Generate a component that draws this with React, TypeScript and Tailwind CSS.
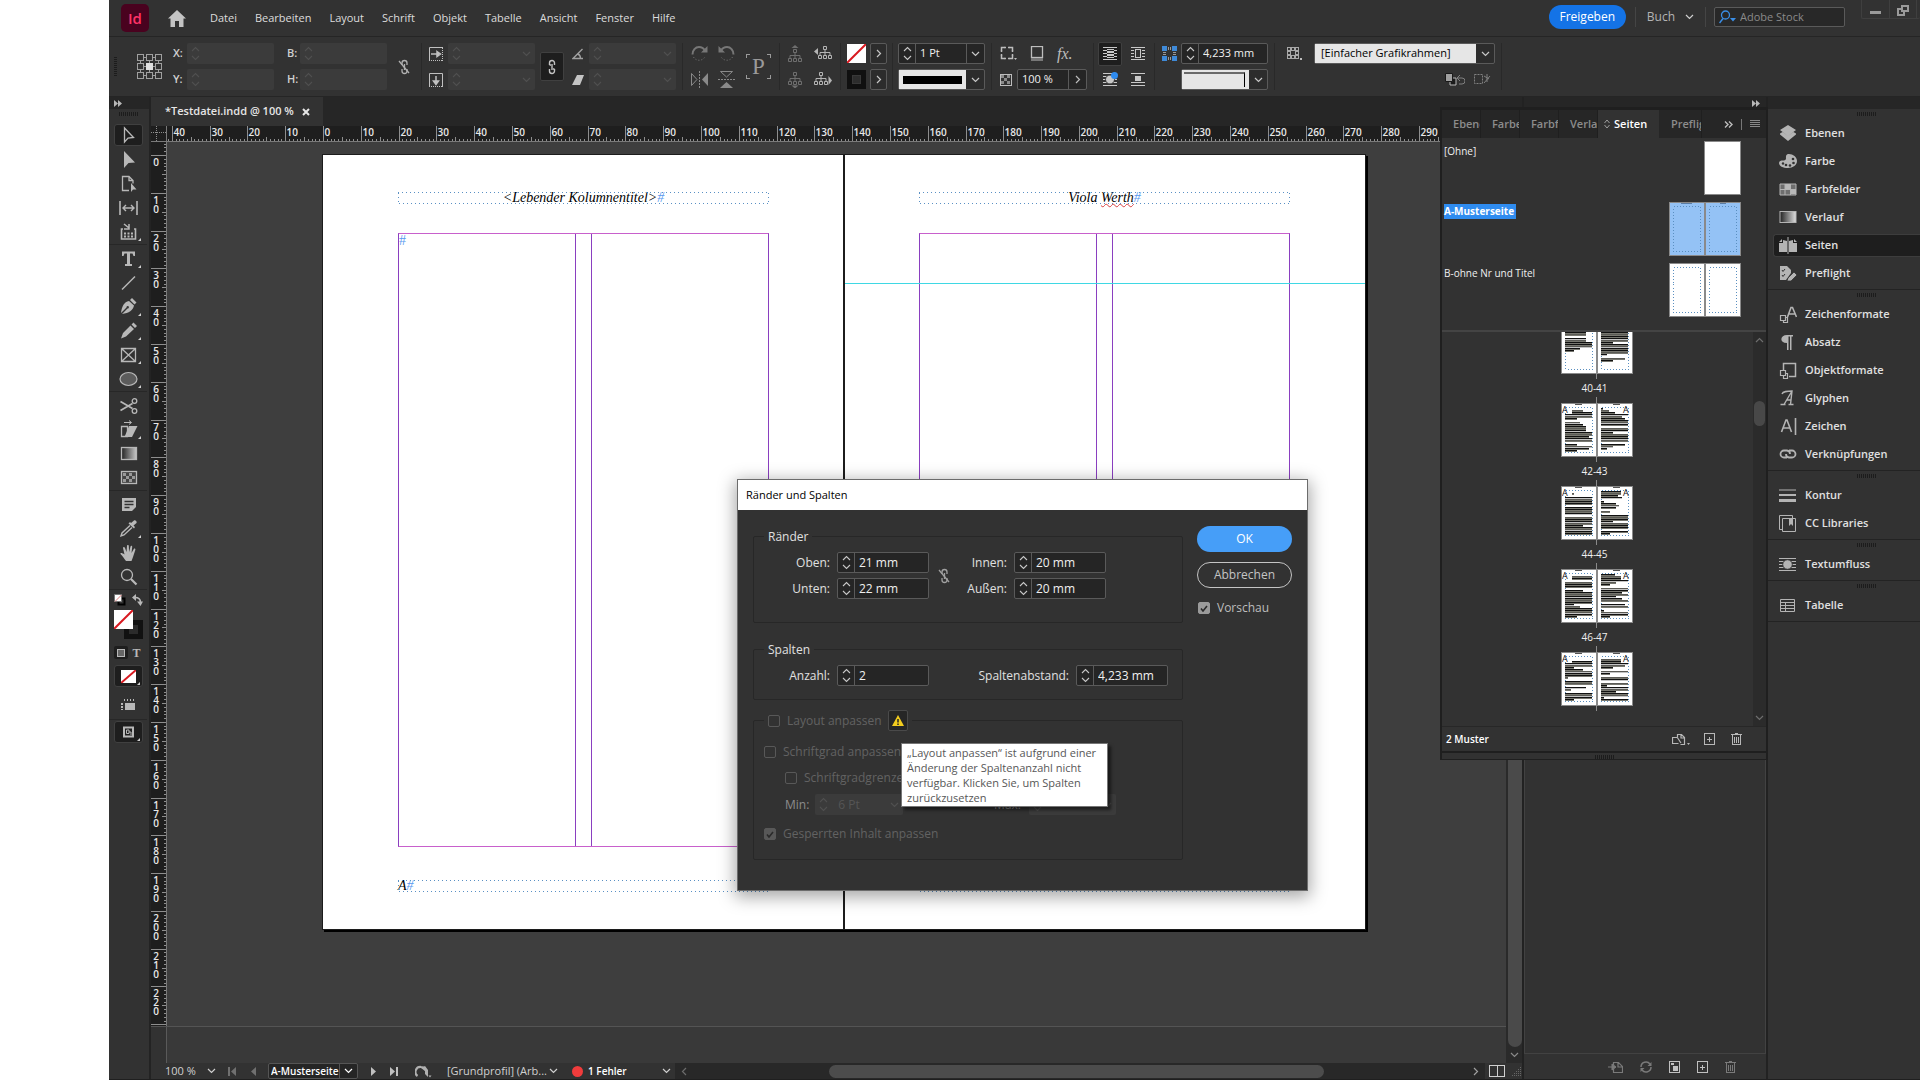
import type { ReactNode } from "react";
import { clsx } from "clsx";

const MM10 = 96 / 2.54;

/* ---------- shared bits ---------- */

function Svg({
  w,
  h,
  crisp,
  className,
  children
}: {
  w: number;
  h: number;
  crisp?: boolean;
  className?: string;
  children: ReactNode;
}) {
  return (
    <svg
      width={w}
      height={h}
      viewBox={`0 0 ${w} ${h}`}
      fill="none"
      stroke="currentColor"
      shapeRendering={crisp ? "crispEdges" : "auto"}
      className={clsx("shrink-0", className)}
      aria-hidden="true"
    >
      {children}
    </svg>
  );
}

function ChevronDown({ className }: { className?: string }) {
  return (
    <Svg w={9} h={6} className={className}>
      <path d="M1 1l3.5 3.5L8 1" strokeWidth="1.2" />
    </Svg>
  );
}

function ChevronRight({ className }: { className?: string }) {
  return (
    <Svg w={6} h={9} className={className}>
      <path d="M1 1l3.5 3.5L1 8" strokeWidth="1.2" />
    </Svg>
  );
}

function DoubleArrow({ className }: { className?: string }) {
  return (
    <Svg w={8} h={7} className={className}>
      <path d="M0 0l4 3.5L0 7zM4 0l4 3.5L4 7z" fill="currentColor" stroke="none" />
    </Svg>
  );
}

function Grip({ className }: { className?: string }) {
  return (
    <Svg w={19} h={4} crisp className={clsx("text-[#1c1c1c]", className)}>
      <path d="M0 2h19" strokeWidth="4" strokeDasharray="1 1" />
    </Svg>
  );
}

function BrokenLink({ className }: { className?: string }) {
  return (
    <Svg w={12} h={16} className={className}>
      <path d="M4 6V4a2.5 2.5 0 015 0v2M4 10v2a2.5 2.5 0 005 0v-2M6.5 5v6" strokeWidth="1.3" />
      <path d="M1 2l10 12" strokeWidth="1.3" />
    </Svg>
  );
}

function Spinner({ dim }: { dim?: boolean }) {
  return (
    <button
      type="button"
      tabIndex={-1}
      disabled={dim}
      aria-label="Wert ändern"
      className={clsx(
        "flex w-[17px] shrink-0 items-center justify-center",
        dim ? "text-[#505050]" : "border-r border-[#5a5a5a] text-[#c8c8c8]"
      )}
    >
      <Svg w={9} h={15}>
        <path d="M1 5l3.5-3.5L8 5M1 10l3.5 3.5L8 10" strokeWidth="1.1" />
      </Svg>
    </button>
  );
}

type FieldProps = {
  id: string;
  label?: string;
  value?: string;
  disabled?: boolean;
  drop?: boolean;
  className?: string;
  inputClassName?: string;
};

function Field({ id, label, value = "", disabled, drop, className, inputClassName }: FieldProps) {
  return (
    <div
      className={clsx(
        "flex h-[21px] shrink-0 rounded-xs",
        disabled ? "bg-[#3b3b3b]" : "border border-[#5a5a5a] bg-[#252525]",
        className
      )}
    >
      <Spinner dim={disabled} />
      <input
        id={id}
        aria-label={label}
        defaultValue={value}
        disabled={disabled}
        className={clsx(
          "w-0 min-w-0 flex-1 bg-transparent outline-none",
          disabled ? "text-[#555555]" : "text-[#f0f0f0]",
          inputClassName ?? "pl-1 text-[11px]"
        )}
      />
      {drop && (
        <span
          className={clsx(
            "flex w-[18px] items-center justify-center",
            disabled ? "text-[#505050]" : "border-l border-[#5a5a5a] text-[#c8c8c8]"
          )}
        >
          <ChevronDown />
        </span>
      )}
    </div>
  );
}

function Sep({ className }: { className?: string }) {
  return <div className={clsx("h-[47px] w-px shrink-0 bg-[#292929]", className)} />;
}

/* ---------- menu bar ---------- */

const menus = ["Datei", "Bearbeiten", "Layout", "Schrift", "Objekt", "Tabelle", "Ansicht", "Fenster", "Hilfe"];

function MenuBar() {
  return (
    <header className="flex h-[37px] shrink-0 items-center border-b border-[#252525] pl-3">
      <div className="flex size-7 items-center justify-center rounded-[5px] bg-[#49021f] text-[15px] font-semibold text-[#ff3366]">
        Id
      </div>
      <button type="button" aria-label="Startseite" className="ml-[19px] text-[#c4c4c4]">
        <Svg w={18} h={17}>
          <path d="M9 0l9 8.5h-2.500V17H11v-6H7v6H2.500V8.500H0z" fill="currentColor" stroke="none" />
        </Svg>
      </button>
      <nav className="ml-6 flex gap-[18px] text-[11px] text-[#dcdcdc]">
        {menus.map((m) => (
          <button key={m} type="button">
            {m}
          </button>
        ))}
      </nav>
      <div className="ml-auto flex h-full items-center">
        <button type="button" className="mb-0.5 h-6 w-[77px] rounded-full bg-[#1473e6] text-xs text-white">
          Freigeben
        </button>
        <div className="mb-0.5 ml-[9px] h-5 w-px bg-[#454545]" />
        <button type="button" className="mb-0.5 ml-[11px] flex items-center gap-[10px] text-xs text-[#b4b4b4]">
          Buch
          <ChevronDown className="text-[#d0d0d0]" />
        </button>
        <div className="mb-0.5 ml-[11px] h-5 w-px bg-[#454545]" />
        <label className="mb-0.5 ml-2 flex h-5 w-[131px] items-center rounded-xs border border-[#5a5a5a] bg-[#282828] pl-1">
          <Svg w={17} h={14} className="text-[#3a8ee6]">
            <circle cx="6.500" cy="5" r="4" strokeWidth="1.3" />
            <path d="M4 8.500L0.500 13" strokeWidth="1.5" />
            <path d="M11 8h6l-3 3.500z" fill="currentColor" stroke="none" />
          </Svg>
          <input
            type="search"
            aria-label="Adobe Stock durchsuchen"
            placeholder="Adobe Stock"
            className="ml-1 w-0 flex-1 bg-transparent text-[11px] outline-none placeholder:text-[#8a8a8a]"
          />
        </label>
        <div className="ml-4 flex h-[19px] self-start rounded-b-xs border border-t-0 border-r-0 border-[#3f3f3f] text-[#9a9a9a]">
          <button type="button" aria-label="Minimieren" className="flex w-[27px] justify-center pt-[11px]">
            <span className="block h-[3px] w-[11px] bg-current" />
          </button>
          <button
            type="button"
            aria-label="Wiederherstellen"
            className="flex w-[27px] items-start justify-center border-l border-[#3f3f3f] pt-[5px]"
          >
            <Svg w={12} h={11} crisp>
              <path d="M5 1h6v5H5zM5 4H1v6h6V7" strokeWidth="2" />
            </Svg>
          </button>
          <span className="w-[4px] border-l border-[#3f3f3f]" />
        </div>
      </div>
    </header>
  );
}

/* ---------- control bar ---------- */

function RefPoint() {
  const pts = [0, 9, 18];
  return (
    <Svg w={25} h={25} crisp className="text-[#a0a0a0]">
      <path d="M3 3.500h18M3 12.500h18M3 21.500h18M3.500 3v18M12.500 3v18M21.500 3v18" />
      {pts.map((y) =>
        pts.map((x) => <rect key={`${x}-${y}`} x={x + 0.5} y={y + 0.5} width="6" height="6" fill="#323232" />)
      )}
      <rect x="9" y="9" width="7" height="7" fill="#e0e0e0" stroke="none" />
    </Svg>
  );
}

function ScaleIcon({ vertical }: { vertical?: boolean }) {
  return (
    <Svg w={14} h={14} className="text-[#c0c0c0]">
      {vertical ? (
        <>
          <path d="M0.500 14V0.500h13V14" />
          <path d="M0 13.500h14" strokeDasharray="1 1" />
          <path d="M7 3v6M4.500 8L7 11.500 9.500 8z" fill="currentColor" strokeWidth="1.500" />
        </>
      ) : (
        <>
          <path d="M14 0.500H0.500v13" />
          <path d="M13.500 1v13M0 13.500h14" strokeDasharray="1 1" />
          <path d="M2 7h6M8 4.500L11.500 7 8 9.500z" fill="currentColor" strokeWidth="1.500" />
        </>
      )}
    </Svg>
  );
}

function RotateIcon({ flip }: { flip?: boolean }) {
  return (
    <Svg w={17} h={17} className={clsx("text-[#777777]", flip && "-scale-x-100")}>
      <path d="M1.500 9.500C1.500 5 4.500 2 8 2c2.500 0 4.500 1 6 3.500" strokeWidth="2" />
      <path d="M16.500 1v6.500H10z" fill="currentColor" stroke="none" />
      <path d="M2.500 12c2 4 9 5 12-1" strokeDasharray="1 2" />
    </Svg>
  );
}

function FlipIcon({ vertical }: { vertical?: boolean }) {
  return (
    <Svg w={17} h={17} className={clsx("text-[#8a8a8a]", vertical && "rotate-90")}>
      <path d="M0.500 2.500v12L6 8.500z" />
      <path d="M17 2v13L11 8.500z" fill="currentColor" stroke="none" />
      <path d="M8.500 0v17" strokeDasharray="2 1" />
    </Svg>
  );
}

function TreeIcon({ dir }: { dir: "up" | "down" | "left" | "right" }) {
  const side = dir === "left" || dir === "right";
  return (
    <Svg w={side ? 18 : 15} h={17} className={side ? "text-[#b4b4b4]" : "text-[#6e6e6e]"}>
      <g transform={dir === "left" ? "translate(4 0)" : dir === "up" ? "translate(0 3)" : undefined}>
        <path d="M5.500 1.500h3v3h-3zM0.500 10.500h3v3h-3zM5.500 10.500h3v3h-3zM10.500 10.500h3v3h-3zM7 5v5M2 10V7.500h10V10" />
      </g>
      {dir === "up" && <path d="M3.500 3L7 0l3.500 3z" fill="currentColor" stroke="none" />}
      {dir === "down" && <path d="M3.500 14.500h7L7 17.500z" fill="currentColor" stroke="none" />}
      {dir === "left" && <path d="M4 3v7L0 6.500z" fill="currentColor" stroke="none" />}
      {dir === "right" && <path d="M14.500 5v9l3.500-4.500z" fill="currentColor" stroke="none" />}
    </Svg>
  );
}

function NoneSwatch({ w, h }: { w: number; h: number }) {
  return (
    <Svg w={w} h={h} className="bg-white">
      <path d={`M0 ${h}L${w} 0`} stroke="#d81920" strokeWidth="2" />
    </Svg>
  );
}

function WrapIcon({ kind }: { kind: "none" | "box" | "shape" | "jump" }) {
  const dots = "M0 1.500h14M0 4.500h14M0 7.500h14M0 10.500h14M0 13.500h14";
  return (
    <Svg w={15} h={15} className="text-[#c8c8c8]">
      {kind === "none" && (
        <>
          <path d={dots} />
          <rect x="4" y="3" width="7" height="9" fill="currentColor" stroke="none" />
          <path d="M4 4.500h7M4 7.500h7M4 10.500h7" stroke="#1e1e1e" />
        </>
      )}
      {kind === "box" && (
        <>
          <path d="M0 1.500h14M0 4.500h3M11 4.500h3M0 7.500h3M11 7.500h3M0 10.500h3M11 10.500h3M0 13.500h14" />
          <rect x="4.500" y="3.500" width="5" height="8" fill="#323232" />
        </>
      )}
      {kind === "shape" && (
        <>
          <path d={dots} />
          <circle cx="7" cy="7.500" r="4.500" fill="currentColor" stroke="#323232" />
          <circle cx="11.500" cy="3.500" r="3.500" fill="#2f8cf0" stroke="none" />
        </>
      )}
      {kind === "jump" && (
        <>
          <path d="M0 1.500h14M0 10.500h14M0 13.500h14" />
          <rect x="4" y="4" width="6" height="5" fill="currentColor" stroke="none" />
        </>
      )}
    </Svg>
  );
}

function ControlBar() {
  return (
    <div className="flex h-[60px] shrink-0 items-center overflow-hidden border-b border-[#252525]">
      <Svg w={3} h={19} crisp className="ml-[5px] text-[#1c1c1c]">
        <path d="M1.500 0v19" strokeWidth="3" strokeDasharray="1 1" />
      </Svg>
      <button type="button" aria-label="Bezugspunkt" className="ml-5">
        <RefPoint />
      </button>

      <div className="ml-[11px] flex flex-col gap-[5px] text-[11px] font-semibold text-[#d0d0d0]">
        <label htmlFor="pos-x" className="flex items-center">
          <span className="w-[14px]">X:</span>
          <Field id="pos-x" disabled className="w-[87px]" />
        </label>
        <label htmlFor="pos-y" className="flex items-center">
          <span className="w-[14px]">Y:</span>
          <Field id="pos-y" disabled className="w-[87px]" />
        </label>
      </div>
      <div className="ml-[13px] flex flex-col gap-[5px] text-[11px] font-semibold text-[#d0d0d0]">
        <label htmlFor="size-b" className="flex items-center">
          <span className="w-[13px]">B:</span>
          <Field id="size-b" disabled className="w-[87px]" />
        </label>
        <label htmlFor="size-h" className="flex items-center">
          <span className="w-[13px]">H:</span>
          <Field id="size-h" disabled className="w-[87px]" />
        </label>
      </div>
      <BrokenLink className="ml-[11px] text-[#b0b0b0]" />
      <Sep className="ml-[11px]" />

      <div className="ml-[7px] flex flex-col gap-[5px]">
        <div className="flex items-center gap-[5px]">
          <ScaleIcon />
          <Field id="scale-x" label="X-Skalierung" disabled drop className="w-[87px]" />
        </div>
        <div className="flex items-center gap-[5px]">
          <ScaleIcon vertical />
          <Field id="scale-y" label="Y-Skalierung" disabled drop className="w-[87px]" />
        </div>
      </div>
      <button
        type="button"
        aria-label="Proportionen beibehalten"
        className="ml-[5px] flex h-[29px] w-6 items-center justify-center rounded-xs border border-[#404040] bg-[#1e1e1e] text-[#c4c4c4]"
      >
        <Svg w={8} h={16}>
          <path d="M1.500 6V4a2.500 2.500 0 015 0v2M1.500 10v2a2.500 2.500 0 005 0v-2M4 5v6M1.500 6H3M5 10h1.500" strokeWidth="1.400" />
        </Svg>
      </button>
      <div className="ml-2 flex flex-col gap-[5px] text-[#a0a0a0]">
        <div className="flex items-center gap-[5px]">
          <Svg w={12} h={12}>
            <path d="M10.500 1L1 10.500h10M6 6c2 1 2.500 3 2.500 4.500" strokeWidth="1.400" />
          </Svg>
          <Field id="angle" label="Drehwinkel" disabled drop className="w-[87px]" />
        </div>
        <div className="flex items-center gap-[5px]">
          <Svg w={12} h={12}>
            <path d="M5 1h7L8 11H0z" fill="#c4c4c4" stroke="none" />
          </Svg>
          <Field id="shear" label="Scherwinkel" disabled drop className="w-[87px]" />
        </div>
      </div>
      <Sep className="ml-[6px]" />

      <div className="ml-2 grid grid-cols-2 gap-x-[10px] gap-y-[9px]">
        <RotateIcon />
        <RotateIcon flip />
        <FlipIcon />
        <FlipIcon vertical />
      </div>
      <div className="relative ml-[11px] flex size-[25px] items-center justify-center font-['Liberation_Serif',serif] text-[23px] leading-none text-[#9a9a9a]">
        <Svg w={25} h={25} crisp className="absolute inset-0">
          <path d="M0.500 4V0.500H4M21 0.500h3.500V4M24.500 21v3.500H21M4 24.500H0.500V21" />
        </Svg>
        P
      </div>
      <Sep className="ml-2" />

      <div className="ml-2 grid grid-cols-[15px_18px] gap-x-[11px] gap-y-[9px]">
        <TreeIcon dir="up" />
        <TreeIcon dir="left" />
        <TreeIcon dir="down" />
        <TreeIcon dir="right" />
      </div>
      <Sep className="ml-2" />

      <div className="ml-[6px] flex flex-col gap-[5px] text-[#c8c8c8]">
        <div className="flex h-[21px] items-center gap-1">
          <NoneSwatch w={19} h={19} />
          <button
            type="button"
            aria-label="Fläche"
            className="flex h-[21px] w-[17px] items-center justify-center rounded-xs border border-[#5a5a5a] bg-[#2c2c2c]"
          >
            <ChevronRight />
          </button>
        </div>
        <div className="flex h-[21px] items-center gap-1">
          <div className="flex size-[19px] items-center justify-center bg-[#101010]">
            <span className="size-[9px] border border-[#383838] bg-[#2d2d2d]" />
          </div>
          <button
            type="button"
            aria-label="Kontur"
            className="flex h-[21px] w-[17px] items-center justify-center rounded-xs border border-[#5a5a5a] bg-[#2c2c2c]"
          >
            <ChevronRight />
          </button>
        </div>
      </div>
      <Sep className="ml-[5px]" />

      <div className="ml-[5px] flex flex-col gap-[5px]">
        <Field id="stroke" label="Konturstärke" value="1 Pt" drop className="w-[87px]" />
        <button
          type="button"
          aria-label="Konturtyp"
          className="flex h-[21px] w-[87px] items-stretch rounded-xs border border-[#5a5a5a] bg-[#2c2c2c] text-[#c8c8c8]"
        >
          <span className="flex flex-1 items-center bg-[#e6e6e6] px-1">
            <span className="h-2 w-full bg-black" />
          </span>
          <span className="flex w-[18px] items-center justify-center">
            <ChevronDown />
          </span>
        </button>
      </div>
      <Sep className="ml-[6px]" />

      <div className="ml-2 flex w-[87px] flex-col gap-[5px] text-[#bdbdbd]">
        <div className="flex h-[21px] items-center gap-[13px]">
          <Svg w={17} h={15}>
            <path d="M4 1.500h2M8 1.500h2M4 12.500h2M8 12.500h2M1.500 4v2M1.500 8v2M12.500 4v2M12.500 8v2" strokeWidth="1.500" />
            <path d="M1.500 4.500v-3h3M9.500 1.500h3v3M1.500 9.500v3h3M9.500 12.500h3v-3" strokeWidth="1.500" />
            <path d="M14 12h3l-1.500 2z" fill="currentColor" stroke="none" />
          </Svg>
          <Svg w={14} h={15}>
            <rect x="1.500" y="0.500" width="11" height="11" strokeWidth="1.300" />
            <path d="M1 13.500h12" stroke="#777777" strokeWidth="3" />
          </Svg>
          <span className="font-['Liberation_Serif',serif] text-[16px] leading-none italic">fx.</span>
        </div>
        <div className="flex items-center gap-[5px]">
          <Svg w={12} h={12} crisp>
            <path d="M0.500 0.500h11v11H0.500z" />
            <path d="M1 1h3v3H1zM7 1h3v3H7zM4 4h3v3H4zM1 7h3v3H1zM7 7h3v3H7z" fill="#8a8a8a" stroke="none" />
          </Svg>
          <div className="flex h-[21px] w-[70px] rounded-xs border border-[#5a5a5a] bg-[#252525]">
            <input
              aria-label="Deckkraft"
              defaultValue="100 %"
              className="w-0 flex-1 bg-transparent pl-1 text-[11px] text-[#f0f0f0] outline-none"
            />
            <span className="flex w-[18px] items-center justify-center border-l border-[#5a5a5a]">
              <ChevronRight />
            </span>
          </div>
        </div>
      </div>
      <Sep className="ml-[6px]" />

      <div className="ml-1 grid grid-cols-2 gap-x-1 gap-y-[2px]">
        <button
          type="button"
          aria-label="Keine Textumfließung"
          className="flex size-6 items-center justify-center rounded-xs border border-[#404040] bg-[#1e1e1e]"
        >
          <WrapIcon kind="none" />
        </button>
        <button type="button" aria-label="Umfließen der Begrenzung" className="flex size-6 items-center justify-center">
          <WrapIcon kind="box" />
        </button>
        <button type="button" aria-label="Konturumfließung" className="flex size-6 items-center justify-center">
          <WrapIcon kind="shape" />
        </button>
        <button type="button" aria-label="Objekt überspringen" className="flex size-6 items-center justify-center">
          <WrapIcon kind="jump" />
        </button>
      </div>
      <Sep className="ml-1" />

      <Svg w={15} h={15} crisp className="mb-[26px] ml-[7px] text-[#9a9a9a]">
        <path d="M0 0h5v5H0zM10 0h5v5h-5zM0 10h5v5H0zM10 10h5v5h-5z" fill="#3f8ad8" stroke="none" />
        <path d="M6 2.500h3M6 12.500h3M2.500 6v3M12.500 6v3" strokeWidth="3" strokeDasharray="1 1" />
      </Svg>
      <div className="ml-1 flex flex-col gap-[5px]">
        <Field id="gap" label="Spaltenabstand" value="4,233 mm" className="w-[87px]" />
        <button
          type="button"
          aria-label="Rahmenstil"
          className="flex h-[21px] w-[87px] items-stretch rounded-xs border border-[#5a5a5a] bg-[#2c2c2c] text-[#c8c8c8]"
        >
          <span className="flex-1 bg-[#e6e6e6] py-0.5 pr-1 pl-0.5">
            <span className="block h-full border-t-2 border-r border-[#6a6a6a] border-r-black" />
          </span>
          <span className="flex w-[18px] items-center justify-center">
            <ChevronDown />
          </span>
        </button>
      </div>
      <Sep className="ml-[6px]" />

      <Svg w={15} h={15} crisp className="mb-[26px] ml-3 text-[#bdbdbd]">
        <path d="M0.500 1.500h3v3h-3zM4.500 1.500h3v3h-3zM8.500 1.500h3v3h-3zM0.500 5.500h3v3h-3zM8.500 5.500h3v3h-3zM0.500 9.500h3v3h-3zM4.500 9.500h3v3h-3zM8.500 9.500h3v3h-3z" stroke="#a8a8a8" />
        <path d="M13 12h2v2h-2z" fill="currentColor" stroke="none" />
      </Svg>
      <div className="ml-3 flex flex-col gap-[5px]">
        <div className="flex h-[21px] w-[181px] rounded-xs border border-[#5a5a5a] bg-[#2c2c2c] text-[#c8c8c8]">
          <select
            aria-label="Objektformat"
            className="w-0 flex-1 appearance-none bg-[#e6e6e6] pl-[6px] text-[11px] text-black outline-none"
          >
            <option>[Einfacher Grafikrahmen]</option>
          </select>
          <span className="flex w-[18px] items-center justify-center">
            <ChevronDown />
          </span>
        </div>
        <div className="flex h-[21px] items-center justify-end gap-[9px] pr-1 text-[#808080]">
          <Svg w={20} h={13}>
            <path d="M5 5h6v7H5z" fill="#1a1a1a" stroke="#b8b8b8" />
            <path d="M0.500 0.500h7v8h-7z" fill="#a0a0a0" stroke="#1a1a1a" />
            <path d="M13 5h4a2 2 0 010 6h-3M15 2l-3 3 3 3" />
          </Svg>
          <Svg w={17} h={13}>
            <path d="M0.500 1.500h8v9h-8z" strokeDasharray="2 1" />
            <path d="M10 10l6-7M10 3l5 3M13 1v8" />
          </Svg>
        </div>
      </div>
      <Sep className="ml-[6px]" />
    </div>
  );
}

/* ---------- tools ---------- */

const toolGroups: { label: string; more?: boolean; active?: boolean; icon: ReactNode }[][] = [
  [
    {
      label: "Auswahl",
      active: true,
      icon: <path d="M5.500 2v14l3.500-4 5.500-0.500z" strokeWidth="1.300" />
    },
    { label: "Direktauswahl", icon: <path d="M5 1v17l4.500-5 6.500-0.500z" fill="currentColor" stroke="none" /> },
    {
      label: "Seite",
      icon: (
        <>
          <path d="M10 16.500H3.500v-14h6.500l4 4v3M10 2.500v4h4" strokeWidth="1.300" />
          <path d="M12 9v9l2-2.500h3.500z" fill="currentColor" stroke="none" />
        </>
      )
    },
    {
      label: "Lücke",
      icon: (
        <>
          <path d="M1 3v14M18 3v14" strokeWidth="1.600" />
          <path d="M4 10h11M7 7l-3 3 3 3M12 7l3 3-3 3" strokeWidth="1.400" />
        </>
      )
    },
    {
      label: "Inhaltsaufnahme",
      more: true,
      icon: (
        <>
          <path d="M4 7H2.500v10h14V7H15" strokeWidth="1.600" />
          <path d="M5 11.500h9M5 14.500h9" strokeWidth="2" strokeDasharray="2 1.500" />
          <path d="M5 2l5 4M10 2v5H5" strokeWidth="1.500" />
        </>
      )
    }
  ],
  [
    {
      label: "Text",
      more: true,
      icon: <path d="M3 2.500h13V7h-1.500l-1-2.500H11V15h2v2H6v-2h2V4.500H5.500L4.500 7H3z" fill="currentColor" stroke="none" />
    },
    { label: "Linie", icon: <path d="M3 16.500L16 3.500" strokeWidth="1.400" /> },
    {
      label: "Zeichenstift",
      more: true,
      icon: (
        <path
          d="M11 3l2-2 4.500 4.500-2 2zM10 4l5 4.500c-1 5-5 7.500-12 8.500l5.500-5.500a1.200 1.200 0 10-1-1L2 16C3 9 5 5 10 4z"
          fill="currentColor"
          stroke="none"
        />
      )
    },
    {
      label: "Buntstift",
      more: true,
      icon: <path d="M12.500 3.500L14.500 1.500l3.500 3.500-2 2zM11.500 4.500l3.500 3.500-8 7.500L2 17.500 4 12z" fill="currentColor" stroke="none" />
    },
    {
      label: "Rechteckrahmen",
      more: true,
      icon: <path d="M2.500 3.500h14v13h-14zM2.500 3.500l14 13M16.500 3.500l-14 13" strokeWidth="1.300" />
    },
    {
      label: "Ellipse",
      more: true,
      icon: <ellipse cx="9.500" cy="10" rx="8.500" ry="6.500" fill="#5c5c5c" strokeWidth="1.200" />
    }
  ],
  [
    {
      label: "Schere",
      icon: (
        <>
          <path d="M1.500 5.500l12 7M1.500 14.500l12-7" strokeWidth="1.700" />
          <circle cx="15.500" cy="5" r="2.300" strokeWidth="1.300" />
          <circle cx="15.500" cy="15" r="2.300" strokeWidth="1.300" />
        </>
      )
    },
    {
      label: "Frei transformieren",
      more: true,
      icon: (
        <>
          <path d="M2.500 6.500h6v10h-6z" strokeWidth="1.300" />
          <path d="M10 6h8.500L13 17H5.500z" fill="currentColor" stroke="none" />
          <path d="M5 2.500h7M10 0.500l2.500 2-2.500 2" />
        </>
      )
    },
    {
      label: "Verlaufsfarbfeld",
      icon: <rect x="2.500" y="3.500" width="15" height="12" fill="url(#tool-fade)" strokeWidth="1.300" />
    },
    {
      label: "Weiche Verlaufskante",
      icon: (
        <>
          <rect x="2.500" y="3.500" width="15" height="12" fill="#444444" strokeWidth="1.300" />
          <path d="M4 5h3v3H4zM10 5h3v3h-3zM7 8h3v3H7zM13 8h3v3h-3zM4 11h3v3H4zM10 11h3v3h-3z" fill="#999999" stroke="none" />
        </>
      )
    }
  ],
  [
    {
      label: "Notiz",
      icon: (
        <>
          <path d="M3 3h14v9l-4 4H3z" fill="currentColor" stroke="none" />
          <path d="M5.500 6.500h9M5.500 9.500h9M5.500 12.500h5" stroke="#323232" strokeWidth="1.300" />
        </>
      )
    },
    {
      label: "Pipette",
      more: true,
      icon: (
        <>
          <path d="M11 6.500l-8 7.500-1 3 3-1 8-7.500" strokeWidth="1.400" />
          <path d="M9.500 4.500l5.500 5 1-1.500-1.500-1.500 3-2.500c1-1.500-1.500-3.500-2.500-2.500L12 4l-1-1z" fill="currentColor" stroke="none" />
        </>
      )
    },
    {
      label: "Hand",
      icon: (
        <path
          d="M7 18c-2-2-3-5-5.500-7C1 9.500 3 9.500 5.500 11.500L4 5c0-1.300 1.600-1.300 2 0l1.500 4L8 3c0-1.300 1.800-1.300 1.800 0l.3 6 1.400-5.500c.4-1.200 1.900-.8 1.700.5L12.500 10l2.300-4c.7-1 2-.3 1.500 1L14 14l-1.500 4z"
          fill="currentColor"
          stroke="none"
        />
      )
    },
    {
      label: "Zoom",
      icon: (
        <>
          <circle cx="8" cy="8" r="5.500" strokeWidth="1.300" />
          <path d="M12 12l5.500 5.500" strokeWidth="2.200" />
        </>
      )
    }
  ]
];

function ToolRule() {
  return <div className="my-px h-px w-full shrink-0 bg-[#272727]" />;
}

function MoreCorner() {
  return (
    <Svg w={3} h={3} className="absolute right-[2px] bottom-[1px] text-[#d0d0d0]">
      <path d="M3 0v3H0z" fill="currentColor" stroke="none" />
    </Svg>
  );
}

function Toolbox() {
  return (
    <aside className="flex w-[42px] shrink-0 flex-col border-r-2 border-[#232323] text-[#b8b8b8]">
      <div className="flex h-3 shrink-0 items-center bg-[#262626] pl-[5px]">
        <DoubleArrow />
      </div>
      <div className="flex h-[14px] shrink-0 justify-center pt-[3px] pr-[2px]">
        <Grip />
      </div>
      {toolGroups.map((group, gi) => (
        <div key={gi} className="flex flex-col items-center pr-[2px]">
          {group.map((t) => (
            <button
              key={t.label}
              type="button"
              aria-label={t.label}
              className={clsx(
                "relative mt-px mb-px flex h-[22px] w-[29px] items-center justify-center rounded-[3px]",
                t.active && "border border-[#404040] bg-[#1e1e1e]"
              )}
            >
              <Svg w={19} h={19}>
                {t.label === "Verlaufsfarbfeld" && (
                  <defs>
                    <linearGradient id="tool-fade">
                      <stop offset="0" stopColor="#222222" />
                      <stop offset="1" stopColor="#c8c8c8" />
                    </linearGradient>
                  </defs>
                )}
                {t.icon}
              </Svg>
              {t.more && <MoreCorner />}
            </button>
          ))}
          <ToolRule />
        </div>
      ))}
      <div className="flex flex-col items-center pr-[2px]">
        <div className="mt-[3px] flex w-[29px] items-center justify-between">
          <Svg w={12} h={12}>
            <path d="M4.500 4.500h6v6h-6z" fill="#323232" stroke="#000000" strokeWidth="2" />
            <path d="M0.500 0.500h7v7h-7z" fill="#ffffff" stroke="#777777" />
            <path d="M1 7.500L7.500 1" stroke="#e08080" />
          </Svg>
          <Svg w={11} h={12}>
            <path d="M3 3.500c3 0 5.500 1 5.500 5" strokeWidth="1.600" />
            <path d="M4 0v7L0 3.500zM5 7.500h6L8.500 12z" fill="currentColor" stroke="none" />
          </Svg>
        </div>
        <div className="mt-1 grid w-[29px]">
          <div className="col-start-1 row-start-1 mt-[10px] ml-[10px] flex size-[19px] items-center justify-center bg-[#111111]">
            <span className="size-[9px] bg-[#2b2b2b]" />
          </div>
          <div className="z-10 col-start-1 row-start-1">
            <NoneSwatch w={19} h={19} />
          </div>
        </div>
        <div className="mt-[7px] flex w-[29px] items-center justify-between">
          <span className="flex h-[13px] w-[14px] items-center justify-center rounded-xs bg-[#1e1e1e]">
            <span className="h-[8px] w-[8px] border border-[#b8b8b8] bg-[#666666]" />
          </span>
          <span className="pr-0.5 font-['Liberation_Serif',serif] text-[12px] leading-none font-bold">T</span>
        </div>
        <button
          type="button"
          aria-label="Ohne anwenden"
          className="relative mt-[6px] flex h-[22px] w-[29px] items-center justify-center rounded-[3px] border border-[#404040] bg-[#1e1e1e]"
        >
          <NoneSwatch w={15} h={13} />
          <MoreCorner />
        </button>
        <Svg w={14} h={12} crisp className="mt-3">
          <path d="M3 0.500h11M3 1.500h11" strokeDasharray="1 2" />
          <path d="M4 4h10v7H4z" fill="currentColor" stroke="none" />
          <path d="M1 4v7" strokeWidth="2" strokeDasharray="2 1" />
        </Svg>
        <div className="mt-2 h-px w-full bg-[#272727]" />
        <button
          type="button"
          aria-label="Bildschirmmodus"
          className="relative mt-px flex h-[22px] w-[29px] items-center justify-center rounded-[3px] border border-[#404040] bg-[#1e1e1e]"
        >
          <Svg w={11} h={12}>
            <path d="M1 1.500h9v9H1z" strokeWidth="2" />
            <path d="M3.500 4h2.500v3.500h-2.500zM6 6h2v3" />
          </Svg>
          <MoreCorner />
        </button>
      </div>
    </aside>
  );
}

/* ---------- rulers ---------- */

function range(from: number, to: number) {
  return Array.from({ length: to - from + 1 }, (_, i) => from + i);
}

function HorizontalRuler() {
  const at = (mm: number) => Math.round(156 + (mm * MM10) / 10) + 0.5;
  return (
    <svg className="h-4 w-0 flex-1 bg-[#1e1e1e]" shapeRendering="crispEdges" aria-hidden="true">
      {range(-41, 354).map((mm) => (
        <path
          key={mm}
          d={`M${at(mm)} 16v${mm % 10 === 0 ? -16 : mm % 5 === 0 ? -5 : -3}`}
          stroke="#8e8e8e"
        />
      ))}
      {range(-4, 29).map((n) => (
        <text key={n} x={at(n * 10) + 1} y="10" fontSize="10" fontWeight="600" fill="#e8e8e8">
          {Math.abs(n * 10)}
        </text>
      ))}
      <path d="M0 15.500h2000" stroke="#7a7a7a" />
    </svg>
  );
}

function VerticalRuler() {
  const at = (mm: number) => Math.round(13 + (mm * MM10) / 10) + 0.5;
  return (
    <svg className="h-full w-4 shrink-0 bg-[#1e1e1e]" shapeRendering="crispEdges" aria-hidden="true">
      {range(-3, 233).map((mm) => (
        <path
          key={mm}
          d={`M16 ${at(mm)}h${mm % 10 === 0 ? -16 : mm % 5 === 0 ? -5 : -3}`}
          stroke="#8e8e8e"
        />
      ))}
      {range(0, 22).map((n) =>
        String(n * 10)
          .split("")
          .map((digit, i) => (
            <text
              key={`${n}-${i}`}
              x="5"
              y={at(n * 10) + 10 + i * 9}
              fontSize="10"
              fontWeight="600"
              textAnchor="middle"
              fill="#e8e8e8"
            >
              {digit}
            </text>
          ))
      )}
      <path d="M15.500 0v2000" stroke="#7a7a7a" />
    </svg>
  );
}

/* ---------- document ---------- */

function FrameHash() {
  return <span className="text-[#5a9af0]">#</span>;
}

function TextFrame({ className, children }: { className?: string; children: ReactNode }) {
  return (
    <div className={clsx("relative mx-[75px] h-3", className)}>
      <svg className="absolute inset-0 size-full" shapeRendering="crispEdges" aria-hidden="true">
        <rect width="100%" height="100%" fill="none" stroke="#5a90c4" strokeWidth="2" strokeDasharray="1 3" />
      </svg>
      {children}
    </div>
  );
}

function Page({ header, footer, right }: { header: ReactNode; footer: ReactNode; right?: boolean }) {
  return (
    <div className="relative flex w-[521px] flex-col bg-white font-['Liberation_Serif',serif] text-[14px] leading-[12px] text-black italic">
      <TextFrame className="mt-[37px] text-center whitespace-nowrap">{header}</TextFrame>
      <div className="mx-[75px] mt-[29px] flex h-[614px] border border-x-[#8a3fc0] border-y-[#c860cc]">
        <div className="flex-1 leading-[14px] not-italic">{!right && <FrameHash />}</div>
        <div className="w-[17px] border-x border-[#8a3fc0]" />
        <div className="flex-1" />
      </div>
      <TextFrame className={clsx("mt-[33px] mb-[37px]", right && "text-right")}>{footer}</TextFrame>
      {right && <div className="absolute inset-x-0 top-[128px] h-px bg-[#3fd8e4]" />}
    </div>
  );
}

function Spread() {
  const pageNumber = (
    <>
      A<FrameHash />
    </>
  );
  return (
    <div className="absolute top-3 left-[155px] flex border border-[#1c1c1c] shadow-[2px_2px_0_#000000]">
      <Page
        header={
          <>
            &lt;Lebender Kolumnentitel&gt;
            <FrameHash />
          </>
        }
        footer={pageNumber}
      />
      <div className="z-10 -mx-px w-[2px] bg-[#1c1c1c]" />
      <Page
        right
        header={
          <>
            Viola <span className="underline decoration-[#d84040] decoration-wavy decoration-1">Werth</span>
            <FrameHash />
          </>
        }
        footer={pageNumber}
      />
    </div>
  );
}

function StatusBar() {
  return (
    <div className="flex h-4 shrink-0 items-center text-[11px] text-[#d0d0d0]">
      <div className="flex w-[524px] shrink-0 items-center whitespace-nowrap">
        <span className="w-[29px] pl-[14px]">100&nbsp;%</span>
        <ChevronDown className="ml-[27px]" />
        <Svg w={8} h={9} className="ml-3 text-[#707070]">
          <path d="M1 0v9" strokeWidth="2" />
          <path d="M8 0v9L3 4.500z" fill="currentColor" stroke="none" />
        </Svg>
        <Svg w={5} h={9} className="ml-[15px] text-[#707070]">
          <path d="M5 0v9L0 4.500z" fill="currentColor" stroke="none" />
        </Svg>
        <span className="ml-3 flex h-4 w-[90px] items-center rounded-xs border border-[#555555] bg-[#252525] font-semibold text-white">
          <select
            aria-label="Seite"
            className="w-0 flex-1 appearance-none bg-transparent pl-[2px] text-[10px] leading-[14px] outline-none"
          >
            <option>A-Musterseite</option>
          </select>
          <span className="flex h-full w-[18px] items-center justify-center border-l border-[#555555]">
            <ChevronDown />
          </span>
        </span>
        <Svg w={5} h={9} className="ml-[13px] text-[#c0c0c0]">
          <path d="M0 0v9l5-4.500z" fill="currentColor" stroke="none" />
        </Svg>
        <Svg w={8} h={9} className="ml-[14px] text-[#c0c0c0]">
          <path d="M7 0v9" strokeWidth="2" />
          <path d="M0 0v9l5-4.500z" fill="currentColor" stroke="none" />
        </Svg>
        <Svg w={17} h={13} className="ml-[17px] text-[#b0b0b0]">
          <path d="M2.500 11A5 5 0 016 2c3 0 5 2 5.500 6" strokeWidth="2.200" />
          <path d="M6 3l4 3v3l3 3v-7L10 1z" fill="currentColor" stroke="none" />
          <path d="M13.500 10.500h3l-1.500 2z" fill="currentColor" stroke="none" />
        </Svg>
        <span className="ml-[15px] w-[97px]">[Grundprofil] (Arb...</span>
        <ChevronDown className="ml-[5px]" />
        <span className="ml-[14px] size-[11px] rounded-full bg-[#f03c3c]" />
        <span className="ml-[5px] text-[10px] font-semibold text-white">1 Fehler</span>
        <ChevronDown className="ml-auto" />
        <span className="w-1" />
      </div>
      <div className="flex h-full min-w-0 flex-1 items-center bg-[#282828] px-[6px] text-[#6c6c6c]">
        <ChevronRight className="rotate-180" />
        <div className="mx-3 flex flex-1 items-center">
          <div className="ml-[17%] h-[13px] w-[65%] rounded-full bg-[#4c4c4c]" />
        </div>
        <ChevronRight className="text-[#a0a0a0]" />
      </div>
      <div className="flex w-[37px] items-center gap-[7px] pl-1">
        <Svg w={16} h={12} crisp>
          <path d="M0.500 0.500h15v11h-15zM8 0v12" />
        </Svg>
        <Svg w={9} h={9} crisp className="text-[#666666]">
          <path d="M8.500 0v9M6.500 2v7M4.500 4v5M2.500 6v3M0.500 8v1" strokeDasharray="1 1" />
        </Svg>
      </div>
    </div>
  );
}

function DocumentWindow() {
  return (
    <main className="flex min-w-0 flex-1 flex-col">
      <div className="flex h-[29px] shrink-0 bg-[#262626]">
        <div className="flex w-[172px] items-center bg-[#323232] pl-[14px] text-[11px] font-semibold whitespace-nowrap text-[#e6e6e6]">
          *Testdatei.indd @ 100 %
          <button type="button" aria-label="Schließen" className="ml-2">
            <Svg w={8} h={8}>
              <path d="M1 1l6 6M7 1L1 7" strokeWidth="2" />
            </Svg>
          </button>
        </div>
      </div>
      <div className="flex min-h-0 flex-1">
        <div className="flex min-w-0 flex-1 flex-col">
          <div className="flex shrink-0">
            <Svg w={16} h={16} crisp className="bg-[#1e1e1e] text-[#8e8e8e]">
              <path d="M0 6.500h16M5.500 0v16" strokeDasharray="1 1" />
              <path d="M0 15.500h16M15.500 0v16" stroke="#7a7a7a" />
            </Svg>
            <HorizontalRuler />
          </div>
          <div className="flex min-h-0 flex-1">
            <VerticalRuler />
            <div className="relative min-w-0 flex-1 overflow-hidden bg-[#3e3e3e]">
              <Spread />
            </div>
          </div>
          <div className="flex h-[37px] shrink-0 border-t border-[#545454]">
            <div className="w-4 border-r border-[#5a5a5a]" />
            <div className="flex-1 bg-[#393939]" />
          </div>
        </div>
        <div className="flex w-4 shrink-0 flex-col items-center border-l border-[#2a2a2a] bg-[#2a2a2a] text-[#8a8a8a]">
          <div className="w-[14px] flex-1 rounded-full bg-[#4a4a4a]" />
          <div className="flex h-4 items-center">
            <ChevronDown />
          </div>
        </div>
      </div>
      <StatusBar />
    </main>
  );
}

/* ---------- pages panel ---------- */

// one digit per text line of a page: its length in ninths of the column
const spreads: { label?: string; pages: [string, string]; clipped?: boolean }[] = [
  { label: "40-41", clipped: true, pages: ["7707799953000000", "9999949999920840"] },
  { label: "42-43", pages: ["0699940567779989904984", "3579789990994999908420"] },
  { label: "44-45", pages: ["0329999099990999969999", "9987015650309994999093"] },
  { label: "46-47", pages: ["0990999069999993599994", "7999530997957908901993"] },
  { label: undefined, pages: ["0299936999109907209993", "0999840930990929959919"] }
];

function PageArt({ lines, left, clipped, master }: { lines?: string; left?: boolean; clipped?: boolean; master?: boolean }) {
  const h = clipped ? 42 : 54;
  const offset = clipped || !lines ? 0 : 49 - lines.length * 2;
  return (
    <svg width="36" height={h} viewBox={`0 0 36 ${h}`} shapeRendering="crispEdges" aria-hidden="true">
      <rect width="36" height={h} fill={master ? "#94c2f5" : "#ffffff"} />
      <rect
        x="4.5"
        y={clipped ? -8 : 4.5}
        width="27"
        height="45"
        fill="none"
        stroke="#5a8fc0"
        strokeDasharray="1 2"
      />
      {lines &&
        lines.split("").map((c, i) => {
          const head = !clipped && i < 3;
          const indent = left && head ? 7 : 0;
          const width = Math.max(0, Number(c) * 3 - (head ? 7 : 0));
          const y = offset + i * 2;
          return (
            <g key={i}>
              <rect x={4 + indent} y={y} width={width} height="1" fill={i % 3 === 1 ? "#5a5a55" : "#111111"} />
              <rect x={4 + indent} y={y + 1} width={width} height="1" fill={i % 4 === 3 ? "#c4c4c4" : "#77776f"} />
            </g>
          );
        })}
      {lines && !clipped && (
        <>
          <rect x={left ? 14 : 16} y="1" width="7" height="1" fill="#555555" />
          <text x={left ? 1 : 26} y="10" fontSize="9" fill="#111111">
            A
          </text>
        </>
      )}
      {master && <rect x={left ? 12 : 15} y="1" width={left ? 11 : 6} height="1" fill="#5a7da5" />}
      <path d={`M0.500 0v${h}M35.500 0v${h}M0 ${h - 0.5}h36${clipped ? "" : "M0 0.500h36"}`} stroke="#8a8a8a" />
    </svg>
  );
}

function PagesPanel() {
  const muted = ["Ebenen", "Farbe", "Farbfelder", "Verlauf"];
  return (
    <section className="absolute top-[10px] right-[152px] flex h-[653px] w-[328px] flex-col border-2 border-t-[3px] border-b border-[#1f1f1f] bg-[#323232] text-[11px] text-[#f0f0f0]">
      <div role="tablist" className="flex h-7 shrink-0 bg-[#262626] font-semibold text-[#8c8c8c]">
        {muted.map((t) => (
          <button
            key={t}
            role="tab"
            type="button"
            className="w-[39px] overflow-hidden border-r border-[#1f1f1f] pl-[11px] text-left whitespace-nowrap"
          >
            {t}
          </button>
        ))}
        <button
          role="tab"
          type="button"
          aria-selected="true"
          className="flex w-[61px] items-center gap-1 bg-[#323232] pl-[6px] text-white"
        >
          <Svg w={6} h={10} className="text-[#a0a0a0]">
            <path d="M0.500 4L3 1l2.500 3M0.500 6L3 9l2.500-3" />
          </Svg>
          Seiten
        </button>
        <button role="tab" type="button" className="w-[43px] overflow-hidden border-r border-[#1f1f1f] pl-3 text-left whitespace-nowrap">
          Preflight
        </button>
        <div className="flex flex-1 items-center justify-end gap-2 pr-[6px] text-[#bdbdbd]">
          <Svg w={9} h={7}>
            <path d="M1 0.500l3 3-3 3M5 0.500l3 3-3 3" strokeWidth="1.400" />
          </Svg>
          <span className="h-[11px] w-px bg-[#777777]" />
          <Svg w={10} h={8} crisp className="text-[#888888]">
            <path d="M0 0.500h10M0 2.500h10M0 4.500h10M0 6.500h10" />
          </Svg>
        </div>
      </div>

      <div className="flex h-[192px] shrink-0 flex-col gap-[7px] pt-[3px] pr-[25px] pl-[2px] text-[10px]">
        <div className="flex h-[54px] justify-between">
          <span className="pt-[3px]">[Ohne]</span>
          <span className="h-[54px] w-[37px] border border-[#8a8a8a] bg-white" />
        </div>
        <div className="flex h-[54px] justify-between">
          <span className="mt-[2px] h-[15px] bg-[#2f8cf0] pr-[2px] leading-[15px] font-bold text-white">A-Musterseite</span>
          <span className="flex">
            <PageArt left master />
            <PageArt master />
          </span>
        </div>
        <div className="flex h-[54px] justify-between">
          <span className="pt-[3px]">B-ohne Nr und Titel</span>
          <span className="flex">
            <PageArt left />
            <PageArt />
          </span>
        </div>
      </div>

      <div className="flex min-h-0 flex-1 border-t-2 border-[#444444]">
        <ol className="flex flex-1 flex-col items-center pr-[2px] text-[10px]">
          {spreads.map((s) => (
            <li key={s.pages[0]} className="flex flex-col items-center">
              {!s.clipped && <span className="h-[6px] w-px bg-[#8a8a8a]" />}
              <span className="flex">
                <PageArt left lines={s.pages[0]} clipped={s.clipped} />
                <PageArt lines={s.pages[1]} clipped={s.clipped} />
              </span>
              <span className="h-[5px] w-px bg-[#8a8a8a]" />
              {s.label && <span className="h-[18px] pr-1 leading-[18px]">{s.label}</span>}
            </li>
          ))}
        </ol>
        <div className="flex w-[13px] flex-col items-center bg-[#2b2b2b] py-[5px] text-[#6e6e6e]">
          <ChevronDown className="rotate-180" />
          <span className="mt-[58px] h-[25px] w-[11px] rounded-full bg-[#484848]" />
          <ChevronDown className="mt-auto" />
        </div>
      </div>

      <div className="flex h-[25px] shrink-0 items-center border-t border-[#272727] pr-6 pl-1 text-[#b8b8b8]">
        <span className="mr-auto text-[10px] font-semibold text-white">2 Muster</span>
        <button type="button" aria-label="Seitenformat bearbeiten">
          <Svg w={18} h={12}>
            <path d="M6.500 10.500h-6v-6h5M5.500 4V1.500h4l3 3v7h-4M9 1v4h3M5 4l4 6" strokeWidth="1.200" />
            <path d="M15 10h3l-1.500 2z" fill="currentColor" stroke="none" />
          </Svg>
        </button>
        <button type="button" aria-label="Neue Seite" className="ml-[14px]">
          <NewIcon />
        </button>
        <button type="button" aria-label="Seiten löschen" className="ml-4">
          <TrashIcon />
        </button>
      </div>
      <div className="flex h-2 shrink-0 justify-center border-t-2 border-[#1f1f1f] pt-[2px]">
        <Grip />
      </div>
    </section>
  );
}

function NewIcon() {
  return (
    <Svg w={11} h={12} crisp>
      <path d="M0.500 0.500h10v11H0.500zM5.500 3.500v5M3 6h5" />
    </Svg>
  );
}

function TrashIcon() {
  return (
    <Svg w={11} h={12} crisp>
      <path d="M0 1.500h11M4 0.500h3M1.500 2v9.500h8V2M3.500 4v6M5.500 4v6M7.500 4v6" />
    </Svg>
  );
}

/* ---------- dock ---------- */

const dockGroups: { label: string; active?: boolean; icon: ReactNode }[][] = [
  [
    {
      label: "Ebenen",
      icon: <path d="M9 0l8 5-8 6-8-6zM1 8.500L3.500 7 9 11l5.500-4L17 8.500v1L9 16 1 9.500z" fill="currentColor" stroke="none" />
    },
    {
      label: "Farbe",
      icon: (
        <>
          <path
            d="M10 1c4 0 8 3 8 7s-4 7-9 7-9-2-9-5c0-2 2-2.500 4-2.500 1.500 0 3-.5 3-2C7 3.500 6.500 1 10 1z"
            fill="currentColor"
            stroke="none"
          />
          <g fill="#323232" stroke="none">
            <circle cx="14" cy="6" r="1.300" />
            <circle cx="14.500" cy="10" r="1.300" />
            <circle cx="11" cy="12.500" r="1.300" />
            <circle cx="7" cy="12" r="1.300" />
            <circle cx="4" cy="10.500" r="1.200" />
          </g>
        </>
      )
    },
    {
      label: "Farbfelder",
      icon: (
        <>
          <path d="M1 3h16v11H1z" fill="#6e6e6e" stroke="currentColor" />
          <path d="M6 3h5v5H6zM11 8h6v5h-6z" fill="#b8b8b8" stroke="none" />
          <path d="M6 3v11M11.500 3v11M1 8.500h16" />
        </>
      )
    },
    {
      label: "Verlauf",
      icon: (
        <>
          <defs>
            <linearGradient id="dock-fade">
              <stop offset="0" stopColor="#222222" />
              <stop offset="1" stopColor="#e0e0e0" />
            </linearGradient>
          </defs>
          <rect x="1" y="2.500" width="16" height="11" fill="url(#dock-fade)" />
        </>
      )
    },
    {
      label: "Seiten",
      active: true,
      icon: (
        <>
          <path d="M4 3l4 1v11H0V6h4zM14 3l-4 1v11h8V6h-4zM0 5l3-3v3zM18 5l-3-3v3z" fill="currentColor" stroke="none" />
          <path d="M9 0v17" />
        </>
      )
    },
    {
      label: "Preflight",
      icon: (
        <>
          <path d="M1 1h7l4 4v3l-5 7H1z" fill="currentColor" stroke="none" />
          <path d="M3 5l1 1.500L6 4M3 10l1 1.500L6 9" stroke="#323232" />
          <path d="M8 16l1-3 6-6 3 3-6 6z" fill="currentColor" stroke="#323232" strokeWidth="0.800" />
        </>
      )
    }
  ],
  [
    {
      label: "Zeichenformate",
      icon: (
        <>
          <path d="M8.500 11L12 1.500h1.500L17.500 11M10 8h6" strokeWidth="1.600" />
          <path d="M1.500 9.500h5v5h-5zM4.500 14.500v2h4v-5h-2" strokeWidth="1.200" />
        </>
      )
    },
    {
      label: "Absatz",
      icon: <path d="M8 1h6v1.500h-1.500V16H11V2.500H9.500V16H8V9C0 9 1 1 8 1z" fill="currentColor" stroke="none" />
    },
    {
      label: "Objektformate",
      icon: (
        <>
          <path d="M4.500 8V1.500h12v13H10" strokeWidth="1.500" />
          <path d="M1.500 8.500h5v5h-5zM4.500 13.500v3h4v-5h-2" strokeWidth="1.200" />
        </>
      )
    },
    {
      label: "Glyphen",
      icon: <path d="M3 4C4 1 8 1 13 1L11.500 14.500M13 1L5 14.500M1.500 14.500h5M9.500 14.500h5M8 10h4" strokeWidth="1.400" />
    },
    {
      label: "Zeichen",
      icon: <path d="M2.500 14L7 2h1l4.500 12M4.500 10h6M16.500 0v17" strokeWidth="1.600" />
    },
    {
      label: "Verknüpfungen",
      icon: (
        <path
          d="M8 11.500H5a3.500 3.500 0 010-7h3a3.500 3.500 0 013 3.500M10 4.500h3a3.500 3.500 0 010 7h-3a3.500 3.500 0 01-3-3.500"
          strokeWidth="1.800"
        />
      )
    }
  ],
  [
    {
      label: "Kontur",
      icon: (
        <>
          <path d="M0 3h17" />
          <path d="M0 8h17" strokeWidth="2" />
          <path d="M0 13.500h17" strokeWidth="3" />
        </>
      )
    },
    {
      label: "CC Libraries",
      icon: (
        <>
          <path d="M3.500 3.500h13v13h-13zM3 14.500H0.500v-14h13V3" />
          <path d="M10 4h4v7l-2-2-2 2z" fill="currentColor" stroke="none" />
        </>
      )
    }
  ],
  [
    {
      label: "Textumfluss",
      icon: (
        <>
          <path d="M0 2.500h17M0 5.500h17M0 8.500h17M0 11.500h17M0 14.500h17" />
          <circle cx="8.500" cy="8.500" r="4.800" fill="currentColor" stroke="#323232" />
        </>
      )
    }
  ],
  [
    {
      label: "Tabelle",
      icon: <path d="M1.500 2.500h14v12h-14zM2 5.500h13M2 8.500h13M2 11.500h13M6.500 5v9" />
    }
  ]
];

function Dock() {
  return (
    <aside className="flex w-[152px] shrink-0 flex-col">
      <div className="h-3 shrink-0 bg-[#262626]" />
      {dockGroups.map((group) => (
        <div key={group[0].label} className="relative border-b border-[#232323] pt-[10px] pb-[2px]">
          <Grip className="absolute top-[3px] left-[89px]" />
          {group.map((d) => (
            <div key={d.label} className="flex h-7 items-center pl-[5px]">
              <button
                type="button"
                className={clsx(
                  "flex h-[23px] flex-1 items-center gap-2 rounded-l-[3px] border border-r-0 pl-[5px] text-[11px] font-semibold text-[#e0e0e0]",
                  d.active ? "border-[#3d3d3d] bg-[#1e1e1e]" : "border-transparent"
                )}
              >
                <Svg w={18} h={17} className="text-[#b4b4b4]">
                  {d.icon}
                </Svg>
                {d.label}
              </button>
            </div>
          ))}
        </div>
      ))}
    </aside>
  );
}

function SideColumn() {
  return (
    <aside className="flex w-[246px] shrink-0 flex-col border-x-2 border-[#222222]">
      <div className="flex h-3 shrink-0 items-center justify-end bg-[#262626] pr-[6px] text-[#b8b8b8]">
        <DoubleArrow />
      </div>
      <div className="flex-1 border border-[#424242]" />
      <div className="flex h-[25px] shrink-0 items-center justify-end gap-[17px] pr-[30px] text-[#c0c0c0]">
        <Svg w={15} h={12} className="text-[#7a7a7a]">
          <path d="M5.500 4V1.500h5l4 4v6h-9V8M10 1v5h4" strokeWidth="1.200" />
          <path d="M0 6h5M4 3l4 3-4 3z" fill="currentColor" />
        </Svg>
        <Svg w={12} h={12} className="text-[#7a7a7a]">
          <path d="M1 6a5 5 0 019-3M11 6a5 5 0 01-9 3" strokeWidth="1.500" />
          <path d="M11.500 1v4h-4zM0.500 11V7h4z" fill="currentColor" stroke="none" />
        </Svg>
        <Svg w={11} h={12} crisp>
          <path d="M0.500 0.500h10v11H0.500z" />
          <path d="M4 5h5v5H4zM2 2h3v2H2z" fill="currentColor" stroke="none" />
        </Svg>
        <NewIcon />
        <span className="text-[#7a7a7a]">
          <TrashIcon />
        </span>
      </div>
    </aside>
  );
}

/* ---------- dialog ---------- */

function Check({
  label,
  checked,
  disabled,
  className
}: {
  label: string;
  checked?: boolean;
  disabled?: boolean;
  className?: string;
}) {
  return (
    <label
      className={clsx(
        "flex h-4 items-center gap-[7px] whitespace-nowrap",
        disabled ? "text-[#626262]" : "text-[#bdbdbd]",
        className
      )}
    >
      <span className="grid size-3 place-items-center">
        <input
          type="checkbox"
          defaultChecked={checked}
          disabled={disabled}
          className={clsx(
            "col-start-1 row-start-1 size-3 appearance-none rounded-xs border",
            disabled ? "border-[#585858] checked:bg-[#585858]" : "border-[#9a9a9a] checked:bg-[#9a9a9a]"
          )}
        />
        {checked && (
          <Svg w={8} h={7} className="z-10 col-start-1 row-start-1 text-[#2a2a2a]">
            <path d="M1 3.500L3 6l4-5" strokeWidth="1.600" />
          </Svg>
        )}
      </span>
      {label}
    </label>
  );
}

function DialogField({ id, label, value }: { id: string; label: string; value: string }) {
  return (
    <div className="flex items-center justify-end gap-[7px]">
      <label htmlFor={id}>{label}</label>
      <Field id={id} value={value} className="w-[92px]" inputClassName="pl-1 text-xs" />
    </div>
  );
}

function MarginsDialog() {
  return (
    <div
      role="dialog"
      aria-labelledby="dialog-title"
      className="absolute top-[382px] left-[628px] z-20 w-[571px] border border-[#6c6c6c] bg-[#323232] text-xs text-[#e0e0e0] shadow-[0_4px_16px_2px_rgba(0,0,0,0.35)]"
    >
      <h2 id="dialog-title" className="flex h-[30px] items-center bg-white pl-2 text-[11px] text-black">
        Ränder und Spalten
      </h2>
      <form className="flex h-[380px] items-start px-[15px] pt-4" onSubmit={(e) => e.preventDefault()}>
        <div className="w-[430px]">
          <fieldset className="h-[97px] rounded-xs border border-[#272727] px-0 pt-[5px]">
            <legend className="ml-[10px] px-1 leading-[21px]">Ränder</legend>
            <div className="flex items-center">
              <div className="flex w-[175px] flex-col gap-[5px]">
                <DialogField id="oben" label="Oben:" value="21 mm" />
                <DialogField id="unten" label="Unten:" value="22 mm" />
              </div>
              <BrokenLink className="ml-[9px] text-[#a0a0a0]" />
              <div className="flex w-[156px] flex-col gap-[5px]">
                <DialogField id="innen" label="Innen:" value="20 mm" />
                <DialogField id="aussen" label="Außen:" value="20 mm" />
              </div>
            </div>
          </fieldset>
          <fieldset className="mt-4 h-[61px] rounded-xs border border-[#272727] pt-[5px]">
            <legend className="ml-[10px] px-1 leading-[21px]">Spalten</legend>
            <div className="flex">
              <div className="w-[175px]">
                <DialogField id="anzahl" label="Anzahl:" value="2" />
              </div>
              <div className="ml-auto pr-[14px]">
                <DialogField id="abstand" label="Spaltenabstand:" value="4,233 mm" />
              </div>
            </div>
          </fieldset>
          <fieldset className="relative mt-[10px] h-[150px] rounded-xs border border-[#272727] text-[#626262]">
            <legend className="ml-[10px] flex items-center px-1">
              <Check label="Layout anpassen" disabled />
              <button
                type="button"
                aria-label="Warnung"
                className="ml-[6px] flex h-[21px] w-5 items-center justify-center rounded-xs border border-[#4a4a4a] bg-[#262626]"
              >
                <Svg w={12} h={11}>
                  <path d="M6 0l6 11H0z" fill="#f2cc1e" stroke="none" />
                  <path d="M6 4v3.500M6 8.500V10" stroke="#222222" strokeWidth="1.500" />
                </Svg>
              </button>
            </legend>
            <Check label="Schriftgrad anpassen" disabled className="mt-[13px] ml-[10px]" />
            <Check label="Schriftgradgrenze" disabled className="mt-[10px] ml-[31px]" />
            <div className="mt-2 flex items-center pl-[31px]">
              <label htmlFor="min" className="mr-[6px] text-[#8c8c8c]">
                Min:
              </label>
              <Field id="min" value="6 Pt" disabled drop className="w-[88px]" inputClassName="pl-[6px] text-xs" />
              <label htmlFor="max" className="ml-auto text-[#8c8c8c]">
                Max:
              </label>
              <Field id="max" disabled drop className="mr-[66px] ml-2 w-[87px]" />
            </div>
            <Check label="Gesperrten Inhalt anpassen" checked disabled className="mt-[11px] ml-[10px]" />
            <div
              role="tooltip"
              className="absolute top-3 left-[147px] z-10 w-[207px] border border-[#767676] bg-white py-px pl-[5px] text-[11px] leading-[15px] whitespace-nowrap text-[#575757] shadow-[3px_3px_3px_rgba(0,0,0,0.5)]"
            >
              „Layout anpassen“ ist aufgrund einer
              <br />
              Änderung der Spaltenanzahl nicht
              <br />
              verfügbar. Klicken Sie, um Spalten
              <br />
              zurückzusetzen
            </div>
          </fieldset>
        </div>
        <div className="ml-auto flex w-[95px] flex-col">
          <button type="submit" className="h-[26px] rounded-full bg-[#469ef8] text-white">
            OK
          </button>
          <button type="button" className="mt-[10px] h-[26px] rounded-full border border-[#c4c4c4] text-[#c4c4c4]">
            Abbrechen
          </button>
          <Check label="Vorschau" checked className="mt-3 pl-px" />
        </div>
      </form>
    </div>
  );
}

export default function App() {
  return (
    <div className="flex h-screen bg-white pl-[109px] font-['Open_Sans','Noto_Sans',sans-serif]">
      <div className="flex min-w-0 flex-1 flex-col overflow-hidden border-b border-[#1f1f1f] bg-[#323232]">
        <MenuBar />
        <ControlBar />
        <div className="relative flex min-h-0 flex-1">
          <Toolbox />
          <DocumentWindow />
          <SideColumn />
          <Dock />
          <PagesPanel />
          <MarginsDialog />
        </div>
      </div>
    </div>
  );
}
